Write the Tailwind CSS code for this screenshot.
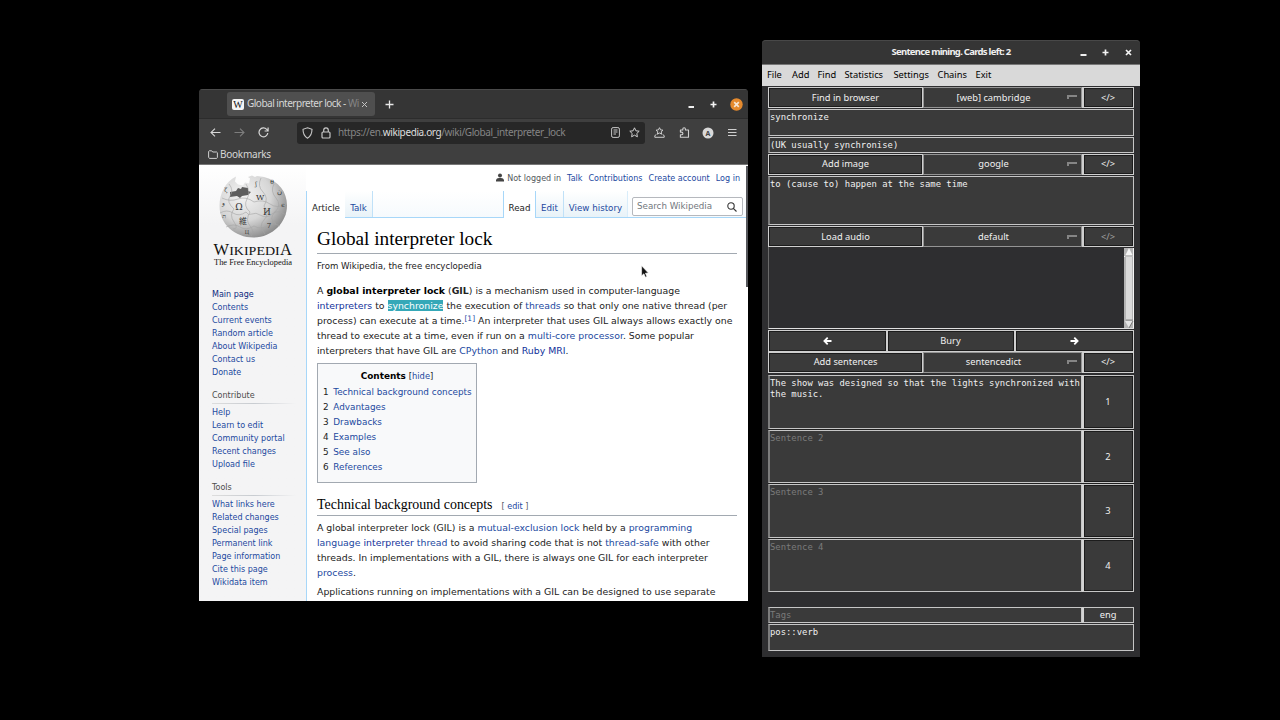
<!DOCTYPE html>
<html lang="en">
<head>
<meta charset="utf-8">
<title>Desktop</title>
<script src="https://cdn.jsdelivr.net/npm/@tailwindcss/browser@4"></script>
</head>
<body class="relative h-[720px] w-[1280px] overflow-hidden bg-black font-['Noto_Sans','DejaVu_Sans',sans-serif]">

<!-- Browser window -->
<section class="absolute left-[199px] top-[89px] flex h-[512px] w-[549px] flex-col overflow-hidden rounded-t-[4px] bg-[#3f3f3f] text-[10px] text-[#d6d6d6]">
  <div class="flex h-[29px] shrink-0 items-center border-t border-[#4a4a4a] bg-[#353535] pl-7">
    <div class="flex h-6 w-[148px] items-center rounded-[3px] bg-[#4f4f4f] pl-[5px]">
      <svg class="h-[11px] w-3 shrink-0" viewBox="0 0 12 11"><rect width="12" height="11" rx="2" fill="#f4f4f4"/><text x="6" y="9" text-anchor="middle" font-family="Liberation Serif" font-size="10" fill="#111">W</text></svg>
      <div class="ml-[3px] w-[112px] shrink-0 overflow-hidden whitespace-nowrap pb-px tracking-[-0.500px]">Global interpreter lock - <span class="text-[#858585]">Wi</span><span class="text-[#606060]">k</span></div>
      <svg class="ml-[2px] h-[7px] w-[7px]" viewBox="0 0 7 7" stroke="#c4c4c4" stroke-width="1"><path d="M1 1l5 5M6 1l-5 5"/></svg>
    </div>
    <svg class="ml-[10px] h-[9px] w-[9px]" viewBox="0 0 9 9" stroke="#e8e8e8" stroke-width="1.3"><path d="M4.5 .5v8M.5 4.5h8"/></svg>
    <div class="ml-auto flex items-center pr-[5.500px]">
      <svg class="h-[7px] w-[7px]" viewBox="0 0 7 7"><path d="M.5 5h5.500v2h-5.500z" fill="#f0f0f0"/></svg>
      <svg class="ml-[15px] h-[7px] w-[7px]" viewBox="0 0 7 7" stroke="#f4f4f4" stroke-width="1.700"><path d="M3.500 .5v6M.5 3.500h6"/></svg>
      <svg class="ml-[13px] h-[13px] w-[13px]" viewBox="0 0 13 13"><circle cx="6.500" cy="6.500" r="6.200" fill="#e58a2e"/><path d="M4.200 4.200l4.600 4.600M8.800 4.200l-4.600 4.600" stroke="#f6e6d3" stroke-width="1.700"/></svg>
    </div>
  </div>
  <div class="flex h-[28px] shrink-0 items-center border-t border-[#2c2c2c] pl-[11px]">
    <svg class="h-[9px] w-[11px]" viewBox="0 0 11 9" fill="none" stroke="#d8d8d8" stroke-width="1.100"><path d="M10.500 4.500H1M5 .7L1 4.500l4 3.800"/></svg>
    <svg class="ml-[13px] h-[9px] w-[11px]" viewBox="0 0 11 9" fill="none" stroke="#7d7d7d" stroke-width="1.100"><path d="M.5 4.500H10M6 .7l4 3.800-4 3.800"/></svg>
    <svg class="ml-[13px] h-[11px] w-[11px]" viewBox="0 0 11 11" fill="none" stroke="#d8d8d8" stroke-width="1.200"><path d="M9.800 6A4.400 4.400 0 1 1 8.700 2.400L10 3.700M10.100 .5v3.500H6.600"/></svg>
    <div class="ml-[28px] flex h-[22px] w-[348px] items-center rounded-[3px] bg-[#272727] pl-[5px] pr-[5px]">
      <svg class="h-3 w-[11px]" viewBox="0 0 11 12" fill="none" stroke="#c8c8c8" stroke-width="1.100"><path d="M5.500 .8L10 2.300c0 4-1 7-4.500 8.900C2 9.300 1 6.300 1 2.300z"/></svg>
      <svg class="ml-2 h-3 w-[10px]" viewBox="0 0 10 12" fill="none" stroke="#c8c8c8" stroke-width="1.200"><rect x="1" y="5" width="8" height="6" rx="1"/><path d="M2.700 5V3.200a2.300 2.300 0 0 1 4.600 0V5"/></svg>
      <div class="ml-[7px] whitespace-nowrap text-[#858585] tracking-[-0.380px]">https://en.<span class="text-[#dedede]">wikipedia.org</span>/wiki/Global_interpreter_lock</div>
      <svg class="ml-auto h-[11px] w-[9px]" viewBox="0 0 9 11" fill="none" stroke="#c8c8c8"><rect x=".6" y=".6" width="7.800" height="9.800" rx="1.500"/><path d="M2.500 3h4M2.500 5h4M2.500 7h2.500"/></svg>
      <svg class="ml-[9px] h-[11px] w-[11px]" viewBox="0 0 11 11" fill="none" stroke="#d0d0d0" stroke-linejoin="round"><path d="M5.500 .8l1.400 3 3.300.4-2.400 2.300.6 3.300-2.900-1.600-2.900 1.600.6-3.300L.8 4.200l3.300-.4z"/></svg>
    </div>
    <svg class="ml-[9px] h-[11px] w-[11px]" viewBox="0 0 11 11" fill="none" stroke="#cfcfcf" stroke-linejoin="round"><path d="M5.500 .7l1.100 2.200 2.400.3-1.800 1.600.5 2.400-2.200-1.200-2.200 1.200.5-2.400L2 3.200l2.400-.3zM2.300 7.600L.8 8.600v1.700h9.400V8.600L8.700 7.600"/></svg>
    <svg class="ml-[14px] h-[11px] w-[11px]" viewBox="0 0 11 11" fill="none" stroke="#cfcfcf" stroke-width="1.100" stroke-linejoin="round"><path d="M3.800 3V2a1.300 1.300 0 0 1 2.600 0v1h3.100v7.300H1.400V7.700h1.200a1.300 1.300 0 0 0 0-2.600H1.400V3z"/></svg>
    <svg class="ml-[12px] h-3 w-3" viewBox="0 0 12 12"><circle cx="6" cy="6" r="5.500" fill="#d9d9d9"/><text x="6" y="8.500" text-anchor="middle" font-family="Noto Sans" font-weight="bold" font-size="7" fill="#444">A</text></svg>
    <svg class="ml-[14px] h-2 w-[9px]" viewBox="0 0 9 8" stroke="#cfcfcf"><path d="M0 .5h8.500M0 3.500h8.500M0 6.500h8.500"/></svg>
  </div>
  <div class="flex h-[19px] shrink-0 items-center border-b border-[#777] pb-px pl-[9px]">
    <svg class="h-[9px] w-[10px]" viewBox="0 0 10 9" fill="none" stroke="#cfcfcf" stroke-linejoin="round"><path d="M.6 7.200V1.400L1.200.8h2.500l1 1.200h4l.7.700v4.800l-.7.900H1.400z"/></svg>
    <div class="ml-[2px] tracking-[-0.250px]">Bookmarks</div>
  </div>

  <!-- Web page -->
  <div class="relative flex min-h-0 flex-1 overflow-hidden bg-white font-['DejaVu_Sans',sans-serif] text-[#222]">
    <nav class="flex w-[107px] shrink-0 flex-col overflow-hidden bg-linear-to-b from-white to-[#f4f4f5] to-[60px] pl-[13px] text-[8.040px] leading-[12.970px] text-[#1c499f]">
      <svg class="mt-2 h-[96px] w-[82px] shrink-0 overflow-visible" viewBox="212 173 82 96">
        <defs>
          <radialGradient id="globe" cx=".35" cy=".32" r=".75"><stop offset="0" stop-color="#f4f4f4"/><stop offset=".55" stop-color="#d6d6d6"/><stop offset="1" stop-color="#858585"/></radialGradient>
        </defs>
        <path d="M236 176.500l-1 5 3 3 5 1 2-3 4 1 1-5-2-1.500 4-1.500 3 1.500 2-1 7 1C279 181 287 192 287 205.500c0 17-15 32-33.500 32S219.500 224 219.500 206c0-13 6-24 16.500-29.500z" fill="url(#globe)"/>
        <path d="M230 192l6-1 2-3 3 1 1-2 6 1v3l3 1-3 3-6 1-2 2-3-2-7 1z" fill="#5e5e5e"/>
        <g fill="none" stroke="#a5a5a5" stroke-width=".6">
          <path d="M222 198q8 4 16 1t16 3q9-3 16 2t16 0M220 213q7-4 13 0t13-1q2 4 6 2t8 1q7 4 12-1t14 1M226 227q8-4 14 0t14-1q7 4 13 0t13 0"/>
          <path d="M229 184q5 6 1 12t4 13q-5 6 0 13t-1 7M246 184q5 8 1 15t3 13q-5 8 0 14t1 10M261 178q-4 8 2 14t1 14q6 8 0 14t1 14M274 184q-4 7 2 14t-1 14 1 12"/>
        </g>
        <g fill="#333" font-family="DejaVu Serif, Noto Sans CJK JP, serif" text-anchor="middle">
          <text x="239" y="210" font-size="9">Ω</text><text x="260" y="200" font-size="8">W</text>
          <text x="267" y="215" font-size="9">И</text><text x="243" y="224" font-size="8">維</text>
          <text x="269" y="228" font-size="7">7</text><text x="226" y="192" font-size="6">ζ</text>
          <text x="223" y="205" font-size="6">و</text><text x="224" y="218" font-size="6">ת</text>
          <text x="279" y="194" font-size="7">ن</text><text x="283" y="207" font-size="6">ϵ</text>
          <text x="256" y="186" font-size="6">ʃ</text><text x="272" y="184" font-size="6">θ</text><text x="247" y="234" font-size="5">Ц</text>
        </g>
        <g fill="#111" font-family="Liberation Serif, serif">
          <text x="213.500" y="255" font-size="16.500" textLength="15.500" lengthAdjust="spacingAndGlyphs">W</text>
          <text x="229.200" y="255" font-size="13" textLength="50.500" lengthAdjust="spacingAndGlyphs">IKIPEDI</text>
          <text x="280" y="255" font-size="16.500" textLength="12" lengthAdjust="spacingAndGlyphs">A</text>
          <text x="214" y="264.600" font-size="9" textLength="78" lengthAdjust="spacingAndGlyphs">The Free Encyclopedia</text>
        </g>
      </svg>
      <ul class="mt-[20px]">
        <li class="text-[#0b2a80]">Main page</li><li>Contents</li><li>Current events</li><li>Random article</li><li>About Wikipedia</li><li>Contact us</li><li>Donate</li>
      </ul>
      <h3 class="mt-[10px] text-[#4d4d4d]">Contribute</h3>
      <div class="h-px w-[84px] shrink-0 bg-linear-to-r from-[#ddd] via-[#c8ccd1] to-transparent"></div>
      <ul class="mt-[3px]">
        <li>Help</li><li>Learn to edit</li><li>Community portal</li><li>Recent changes</li><li>Upload file</li>
      </ul>
      <h3 class="mt-[10px] text-[#4d4d4d]">Tools</h3>
      <div class="h-px w-[84px] shrink-0 bg-linear-to-r from-[#ddd] via-[#c8ccd1] to-transparent"></div>
      <ul class="mt-[3.500px]">
        <li>What links here</li><li>Related changes</li><li>Special pages</li><li>Permanent link</li><li>Page information</li><li>Cite this page</li><li>Wikidata item</li>
      </ul>
    </nav>
    <div class="flex min-w-0 flex-1 flex-col">
      <header class="flex h-[53px] shrink-0 flex-col">
        <div class="flex h-[26px] items-center justify-end whitespace-nowrap pr-2 pt-[3px] text-[8.040px] text-[#1c499f]">
          <svg class="mb-[4px] mr-[3px] h-[9px] w-2" viewBox="0 0 8 9" fill="#444"><circle cx="4" cy="2.500" r="2"/><path d="M0 8.500V7q.5-2 3-2h2q2.500 0 3 2v1.500z"/></svg>
          <span class="mr-[6px] text-[#54595d]">Not logged in</span><span class="mr-[6px]">Talk</span><span class="mr-[6px]">Contributions</span><span class="mr-[6px]">Create account</span><span>Log in</span>
        </div>
        <div class="flex h-[27px] w-full border-b border-[#a7d7f9] bg-linear-to-b from-white to-[#f6fafd] text-[8.710px] text-[#1c499f]">
          <div class="flex h-[27px] w-[39px] items-center justify-center border-l border-[#a7d7f9] bg-white pt-[8px] text-[#222]">Article</div>
          <div class="flex h-[26px] w-[28px] items-center justify-center border-r border-[#c0e1f8] bg-linear-to-b from-white to-[#e8f2f8] pt-[9px]">Talk</div>
          <div class="ml-[130px] flex h-[27px] w-[33px] items-center justify-center border-x border-[#a7d7f9] bg-white pt-[8px] text-[#222]">Read</div>
          <div class="flex h-[26px] w-[28px] items-center justify-center border-r border-[#c0e1f8] bg-linear-to-b from-white to-[#e8f2f8] pt-[9px]">Edit</div>
          <div class="flex h-[26px] w-[64px] items-center justify-center border-r border-[#d9edfa] bg-linear-to-b from-white to-[#e8f2f8] pt-[9px]">View history</div>
          <div class="ml-[4px] mt-[6px] flex h-[19px] w-[111px] items-center justify-between rounded-[2px] border border-[#b5b8bd] bg-white pl-1 pr-[5px] text-[8.710px] text-[#72777d]">Search Wikipedia
            <svg class="h-[10px] w-[10px]" viewBox="0 0 10 10" fill="none" stroke="#333" stroke-width="1.100"><circle cx="4" cy="4" r="3.200"/><path d="M6.300 6.300L9.500 9.500"/></svg>
          </div>
        </div>
      </header>
      <main class="flex min-h-0 flex-1 flex-col border-l border-[#a7d7f9] bg-white pl-[10px] pr-[11px] text-[9.360px] leading-[15px] [&_a]:text-[#1c499f] whitespace-nowrap">
        <h1 class="mt-[8px] h-[28px] shrink-0 border-b border-[#a2a9b1] font-['Liberation_Serif',serif] text-[19.250px] leading-[25px] text-black">Global interpreter lock</h1>
        <p class="mt-[5px] text-[8.600px] leading-[14px]">From Wikipedia, the free encyclopedia</p>
        <div class="mt-[10px]">
          <p>A <b class="text-black">global interpreter lock</b> (<b>GIL</b>) is a mechanism used in computer-language</p>
          <p><a class="!text-[#10309a]">interpreters</a> to <span class="bg-[#35a8b8] text-white">synchronize</span> the execution of <a>threads</a> so that only one native thread (per</p>
          <p>process) can execute at a time.<a class="relative -top-[3px] text-[7.500px] leading-none">[1]</a> An interpreter that uses GIL always allows exactly one</p>
          <p>thread to execute at a time, even if run on a <a>multi-core processor</a>. Some popular</p>
          <p>interpreters that have GIL are <a>CPython</a> and <a class="!text-[#10309a]">Ruby MRI</a>.</p>
        </div>
        <div class="mt-[5px] h-[120px] w-[160px] shrink-0 border border-[#a2a9b1] bg-[#f8f9fa] pl-[5px] pt-1">
          <div class="pr-[5px] text-center text-[8.910px] leading-[16px]"><b class="text-black">Contents</b> <span class="text-[8.380px]">[<a>hide</a>]</span></div>
          <ol class="mt-px text-[8.860px] leading-[15px] [&_a]:-ml-[1px]">
            <li>1&nbsp; <a>Technical background concepts</a></li><li>2&nbsp; <a>Advantages</a></li><li>3&nbsp; <a>Drawbacks</a></li><li>4&nbsp; <a>Examples</a></li><li>5&nbsp; <a>See also</a></li><li>6&nbsp; <a>References</a></li>
          </ol>
        </div>
        <h2 class="mt-[11px] flex h-[22px] shrink-0 items-baseline border-b border-[#a2a9b1] font-['Liberation_Serif',serif] text-[13.950px] leading-[21px] text-black"><span>Technical background concepts</span><span class="ml-[9px] font-['DejaVu_Sans',sans-serif] text-[8.040px] text-[#54595d]">[ <a>edit</a> ]</span></h2>
        <div class="mt-1">
          <p>A global interpreter lock (GIL) is a <a>mutual-exclusion lock</a> held by a <a>programming</a></p>
          <p><a>language</a> <a class="!text-[#10309a]">interpreter</a> <a>thread</a> to avoid sharing code that is not <a>thread-safe</a> with other</p>
          <p>threads. In implementations with a GIL, there is always one GIL for each interpreter</p>
          <p><a>process</a>.</p>
        </div>
        <p class="mt-[4px]">Applications running on implementations with a GIL can be designed to use separate</p>
      </main>
    </div>
    <div class="absolute right-0 top-px h-[121px] w-[2px] bg-[#55565a]"></div>
  </div>
</section>

<!-- Sentence mining window -->
<section class="absolute left-[762px] top-[40px] flex h-[617px] w-[378px] flex-col rounded-t-[4px] bg-[#2e2e30] text-[9.300px] text-[#f0f0f0]">
  <div class="grid h-[24px] shrink-0 grid-cols-[1fr_auto_1fr] items-center rounded-t-[4px] border-t border-[#484848] bg-[#353535] pb-px">
    <b class="col-start-2 whitespace-nowrap text-[9.500px] tracking-[-0.720px]">Sentence mining. Cards left: 2</b>
    <div class="flex items-center justify-end pr-[8.500px]">
      <svg class="h-[7px] w-[7px]" viewBox="0 0 7 7"><path d="M.5 5h6v2h-6z" fill="#f0f0f0"/></svg>
      <svg class="ml-[15px] h-[7px] w-[7px]" viewBox="0 0 7 7" stroke="#f4f4f4" stroke-width="1.700"><path d="M3.500 .5v6M.5 3.500h6"/></svg>
      <svg class="ml-4 h-[7px] w-[7px]" viewBox="0 0 7 7" stroke="#f4f4f4" stroke-width="1.700"><path d="M1 1l5 5M6 1L1 6"/></svg>
    </div>
  </div>
  <div class="flex h-[22px] shrink-0 items-center border-t border-[#777] bg-[#d9d9d9] pb-[2px] pl-[5px] text-black">
    <span class="w-[25px]">File</span><span class="w-[25.500px]">Add</span><span class="w-[27px]">Find</span><span class="w-[49px]">Statistics</span><span class="w-[44px]">Settings</span><span class="w-[38px]">Chains</span><span>Exit</span>
  </div>
  <div class="flex flex-1 flex-col px-[6px] pt-[1px] leading-none">
    <div class="flex h-[21px] w-[366px] shrink-0 *:flex *:items-center *:justify-center *:border *:border-[#cfcfcf] *:bg-[#3a3a3a] *:shadow-[inset_0_0_0_1px_#1c1c1c]">
      <div class="w-[155px]">Find in browser</div>
      <div class="relative w-[159px] !border-[#949494] !shadow-none pr-[18px]">[web] cambridge<i class="absolute right-[4px] top-[7px] h-[4px] w-[10px] border-l-2 border-t-2 border-[#858585]"></i></div>
      <div class="w-[52px] border-l-2! pr-px">&lt;/&gt;</div>
    </div>
    <div class="mt-px h-[27px] w-[366px] shrink-0 border border-l-2 border-[#c6c6c6] border-l-[#7c7c7c] bg-[#3a3a3a] pt-[2px] font-['DejaVu_Sans_Mono',monospace] text-[8.880px] leading-[11px]">synchronize</div>
    <div class="mt-px h-[16px] w-[366px] shrink-0 border border-l-2 border-[#c6c6c6] border-l-[#7c7c7c] bg-[#3a3a3a] pt-[2px] font-['DejaVu_Sans_Mono',monospace] text-[8.880px] leading-[11px]">(UK usually synchronise)</div>
    <div class="mt-px flex h-[21px] w-[366px] shrink-0 *:flex *:items-center *:justify-center *:border *:border-[#cfcfcf] *:bg-[#3a3a3a] *:pb-px *:shadow-[inset_0_0_0_1px_#1c1c1c]">
      <div class="w-[155px]">Add image</div>
      <div class="relative w-[159px] !border-[#949494] !shadow-none pr-[18px]">google<i class="absolute right-[4px] top-[7px] h-[4px] w-[10px] border-l-2 border-t-2 border-[#858585]"></i></div>
      <div class="w-[52px] border-l-2! pr-px">&lt;/&gt;</div>
    </div>
    <div class="mt-px h-[49px] w-[366px] shrink-0 border border-l-2 border-[#c6c6c6] border-l-[#7c7c7c] bg-[#3a3a3a] pt-[2px] font-['DejaVu_Sans_Mono',monospace] text-[8.880px] leading-[11px]">to (cause to) happen at the same time</div>
    <div class="mt-px flex h-[21px] w-[366px] shrink-0 *:flex *:items-center *:justify-center *:border *:border-[#cfcfcf] *:bg-[#3a3a3a] *:shadow-[inset_0_0_0_1px_#1c1c1c]">
      <div class="w-[155px]">Load audio</div>
      <div class="relative w-[159px] !border-[#949494] !shadow-none pr-[18px]">default<i class="absolute right-[4px] top-[8px] h-[4px] w-[10px] border-l-2 border-t-2 border-[#858585]"></i></div>
      <div class="w-[52px] border-l-2! pr-px text-[#a0a0a0]">&lt;/&gt;</div>
    </div>
    <div class="flex h-[82px] w-[366px] shrink-0 justify-end border-b border-l border-b-[#e0e0e0] border-l-[#6a6a6a] pt-px">
      <svg class="h-[80px] w-[10px]" viewBox="0 0 10 80"><path fill="#b3b3b3" d="M0 0h10v80H0z"/><path fill="#d9d9d9" d="M2 9h6v63H2z"/><path fill="#f4f4f4" d="M5 0l4 8H1zM0 8h10v1H0zM9 0h1v80H9z"/><path d="M1 8h8M2 72h7" stroke="#888"/><path fill="#e4e4e4" d="M1 73h8l-4 7z"/><path d="M9 73l-4 7" stroke="#777"/></svg>
    </div>
    <div class="mt-px flex h-[22px] w-[366px] shrink-0 *:flex *:items-center *:justify-center *:border *:border-[#cfcfcf] *:bg-[#3a3a3a] *:shadow-[inset_0_0_0_1px_#1c1c1c]">
      <div class="w-[119px] pr-px"><svg class="h-[8px] w-[9px]" viewBox="0 0 9 8" fill="none" stroke="#fff" stroke-width="1.800"><path d="M8.500 4H1.500M4.700 .7L1.400 4l3.300 3.300"/></svg></div>
      <div class="w-[128px] pr-px">Bury</div>
      <div class="w-[119px] pr-px"><svg class="h-[8px] w-[9px]" viewBox="0 0 9 8" fill="none" stroke="#fff" stroke-width="1.800"><path d="M.5 4h7M4.300 .7L7.600 4 4.300 7.300"/></svg></div>
    </div>
    <div class="flex h-[21px] w-[366px] shrink-0 *:flex *:items-center *:justify-center *:border *:border-[#cfcfcf] *:bg-[#3a3a3a] *:pb-px *:shadow-[inset_0_0_0_1px_#1c1c1c]">
      <div class="w-[155px]">Add sentences</div>
      <div class="relative w-[159px] !border-[#949494] !shadow-none pr-[18px]">sentencedict<i class="absolute right-[4px] top-[7px] h-[4px] w-[10px] border-l-2 border-t-2 border-[#858585]"></i></div>
      <div class="w-[52px] border-l-2! pr-px">&lt;/&gt;</div>
    </div>
    <div class="mt-[2px] flex w-[366px] flex-col gap-px bg-[#202020] *:flex *:h-[53.600px]">
      <div>
        <div class="w-[314px] whitespace-nowrap border border-l-2 border-[#c6c6c6] border-l-[#7c7c7c] bg-[#3a3a3a] pt-[2px] font-['DejaVu_Sans_Mono',monospace] text-[8.880px] leading-[11px]">The show was designed so that the lights synchronized with<br>the music.</div>
        <div class="flex w-[52px] items-center justify-center border border-l-2 border-[#c6c6c6] border-l-[#d4d4d4] bg-[#3a3a3a] pr-px shadow-[inset_0_0_0_1px_#1c1c1c]">1</div>
      </div>
      <div>
        <div class="w-[314px] border border-l-2 border-[#c6c6c6] border-l-[#7c7c7c] bg-[#3a3a3a] pt-[2px] font-['DejaVu_Sans_Mono',monospace] text-[8.880px] leading-[11px] text-[#7a7a7a]">Sentence 2</div>
        <div class="flex w-[52px] items-center justify-center border border-l-2 border-[#c6c6c6] border-l-[#d4d4d4] bg-[#3a3a3a] pr-px shadow-[inset_0_0_0_1px_#1c1c1c]">2</div>
      </div>
      <div>
        <div class="w-[314px] border border-l-2 border-[#c6c6c6] border-l-[#7c7c7c] bg-[#3a3a3a] pt-[2px] font-['DejaVu_Sans_Mono',monospace] text-[8.880px] leading-[11px] text-[#7a7a7a]">Sentence 3</div>
        <div class="flex w-[52px] items-center justify-center border border-l-2 border-[#c6c6c6] border-l-[#d4d4d4] bg-[#3a3a3a] pr-px shadow-[inset_0_0_0_1px_#1c1c1c]">3</div>
      </div>
      <div>
        <div class="w-[314px] border border-l-2 border-[#c6c6c6] border-l-[#7c7c7c] bg-[#3a3a3a] pt-[2px] font-['DejaVu_Sans_Mono',monospace] text-[8.880px] leading-[11px] text-[#7a7a7a]">Sentence 4</div>
        <div class="flex w-[52px] items-center justify-center border border-l-2 border-[#c6c6c6] border-l-[#d4d4d4] bg-[#3a3a3a] pr-px shadow-[inset_0_0_0_1px_#1c1c1c]">4</div>
      </div>
    </div>
    <div class="mt-[14.600px] flex h-4 w-[366px] shrink-0">
      <div class="w-[314px] border border-l-2 border-[#c6c6c6] border-l-[#7c7c7c] bg-[#3a3a3a] pt-[2px] font-['DejaVu_Sans_Mono',monospace] text-[8.880px] leading-[11px] text-[#7a7a7a]">Tags</div>
      <div class="flex w-[52px] items-center justify-center border border-l-2 border-[#c6c6c6] border-l-[#d4d4d4] bg-[#3a3a3a] pr-px">eng</div>
    </div>
    <div class="mt-px h-[27px] w-[366px] shrink-0 border border-l-2 border-[#c6c6c6] border-l-[#7c7c7c] bg-[#3a3a3a] pt-[2px] font-['DejaVu_Sans_Mono',monospace] text-[8.880px] leading-[11px]">pos::verb</div>
  </div>
</section>

<!-- Mouse pointer -->
<svg class="absolute left-[641px] top-[265px] h-[13px] w-[8px]" viewBox="0 0 8 13"><path d="M.6 .8v10l2.300-2 1.500 3.400 1.500-.7-1.500-3.300 3-.2z" fill="#111" stroke="#fff" stroke-width=".6"/></svg>
</body>
</html>
